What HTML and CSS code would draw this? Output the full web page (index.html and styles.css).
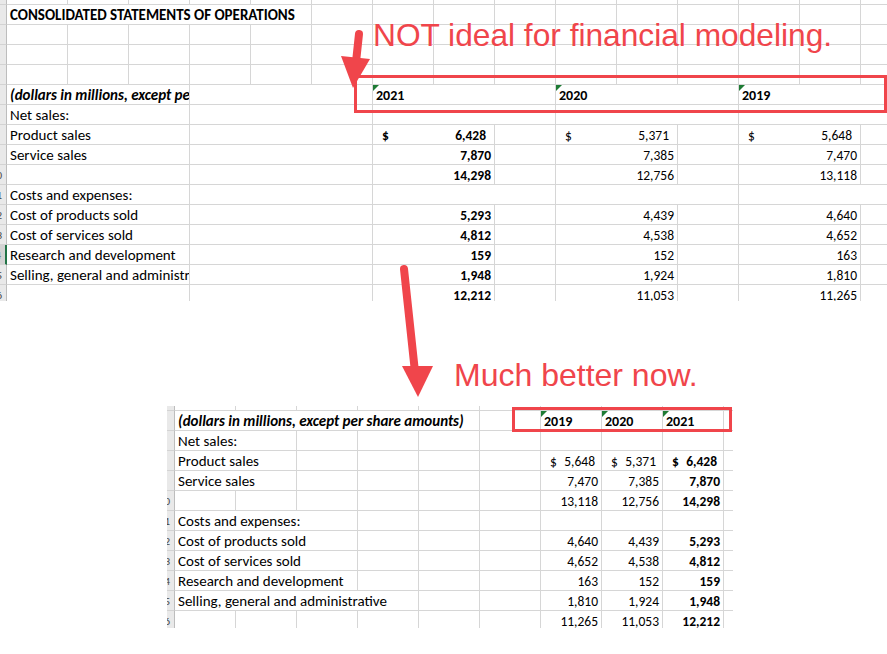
FILE: index.html
```html
<!DOCTYPE html>
<html lang="en">
<head>
<meta charset="utf-8">
<title>Consolidated statements of operations</title>
<link rel="stylesheet" href="styles.css">
</head>
<body>
<div class="page">

  <div class="sheet sheet-top">
    <div class="row stub"><div class="rh"></div><div class="c"></div><div class="c"></div><div class="c"></div><div class="c"></div><div class="c"></div><div class="c"></div><div class="c"></div><div class="c"></div><div class="c"></div><div class="c"></div><div class="c"></div><div class="c"></div><div class="c"></div><div class="c"></div><div class="c"></div></div>
    <div class="row"><div class="rh"></div><div class="c s5 t title">CONSOLIDATED STATEMENTS OF OPERATIONS</div><div class="c"></div><div class="c"></div><div class="c"></div><div class="c"></div><div class="c"></div><div class="c"></div><div class="c"></div><div class="c"></div><div class="c"></div><div class="c"></div></div>
    <div class="row"><div class="rh"></div><div class="c"></div><div class="c"></div><div class="c"></div><div class="c"></div><div class="c"></div><div class="c"></div><div class="c"></div><div class="c"></div><div class="c"></div><div class="c"></div><div class="c"></div><div class="c"></div><div class="c"></div><div class="c"></div><div class="c"></div></div>
    <div class="row"><div class="rh"></div><div class="c"></div><div class="c"></div><div class="c"></div><div class="c"></div><div class="c"></div><div class="c"></div><div class="c"></div><div class="c"></div><div class="c"></div><div class="c"></div><div class="c"></div><div class="c"></div><div class="c"></div><div class="c"></div><div class="c"></div></div>
    <div class="row"><div class="rh"></div><div class="c"></div><div class="c"></div><div class="c"></div><div class="c"></div><div class="c"></div><div class="c"></div><div class="c"></div><div class="c"></div><div class="c"></div><div class="c"></div><div class="c"></div><div class="c"></div><div class="c"></div><div class="c"></div><div class="c"></div></div>
    <div class="row"><div class="rh"></div><div class="c s3 t bi">(dollars in millions, except per share amounts)</div><div class="c s3"></div><div class="c s3 t yr flag">2021</div><div class="c s3 t yr flag">2020</div><div class="c s3 t yr flag">2019</div></div>
    <div class="row"><div class="rh"></div><div class="c s3 t">Net sales:</div><div class="c s3"></div><div class="c s3"></div><div class="c s3"></div><div class="c s3"></div></div>
    <div class="row"><div class="rh"></div><div class="c s3 t">Product sales</div><div class="c s3"></div><div class="c s2 n acct b"><span>$</span><span>6,428</span></div><div class="c"></div><div class="c s2 n acct"><span>$</span><span>5,371</span></div><div class="c"></div><div class="c s2 n acct"><span>$</span><span>5,648</span></div><div class="c"></div></div>
    <div class="row"><div class="rh"></div><div class="c s3 t">Service sales</div><div class="c s3"></div><div class="c s2 n b"><span>7,870</span></div><div class="c"></div><div class="c s2 n"><span>7,385</span></div><div class="c"></div><div class="c s2 n"><span>7,470</span></div><div class="c"></div></div>
    <div class="row"><div class="rh"><span>10</span></div><div class="c s3 t"></div><div class="c s3"></div><div class="c s2 n b"><span>14,298</span></div><div class="c"></div><div class="c s2 n"><span>12,756</span></div><div class="c"></div><div class="c s2 n"><span>13,118</span></div><div class="c"></div></div>
    <div class="row"><div class="rh"><span>11</span></div><div class="c s3 t">Costs and expenses:</div><div class="c s3"></div><div class="c s3"></div><div class="c s3"></div><div class="c s3"></div></div>
    <div class="row"><div class="rh"><span>12</span></div><div class="c s3 t">Cost of products sold</div><div class="c s3"></div><div class="c s2 n b"><span>5,293</span></div><div class="c"></div><div class="c s2 n"><span>4,439</span></div><div class="c"></div><div class="c s2 n"><span>4,640</span></div><div class="c"></div></div>
    <div class="row"><div class="rh"><span>13</span></div><div class="c s3 t">Cost of services sold</div><div class="c s3"></div><div class="c s2 n b"><span>4,812</span></div><div class="c"></div><div class="c s2 n"><span>4,538</span></div><div class="c"></div><div class="c s2 n"><span>4,652</span></div><div class="c"></div></div>
    <div class="row"><div class="rh active"><span>14</span></div><div class="c s3 t">Research and development</div><div class="c s3"></div><div class="c s2 n b"><span>159</span></div><div class="c"></div><div class="c s2 n"><span>152</span></div><div class="c"></div><div class="c s2 n"><span>163</span></div><div class="c"></div></div>
    <div class="row"><div class="rh"><span>15</span></div><div class="c s3 t">Selling, general and administrative</div><div class="c s3"></div><div class="c s2 n b"><span>1,948</span></div><div class="c"></div><div class="c s2 n"><span>1,924</span></div><div class="c"></div><div class="c s2 n"><span>1,810</span></div><div class="c"></div></div>
    <div class="row"><div class="rh"><span>16</span></div><div class="c s3 t"></div><div class="c s3"></div><div class="c s2 n b"><span>12,212</span></div><div class="c"></div><div class="c s2 n"><span>11,053</span></div><div class="c"></div><div class="c s2 n"><span>11,265</span></div><div class="c"></div></div>
  </div>

  <div class="sheet sheet-bottom">
    <div class="row stub"><div class="rh"></div><div class="c"></div><div class="c"></div><div class="c"></div><div class="c"></div><div class="c"></div><div class="c"></div><div class="c"></div><div class="c"></div><div class="c"></div><div class="c edge"></div></div>
    <div class="row"><div class="rh"></div><div class="c s5 t bi">(dollars in millions, except per share amounts)</div><div class="c"></div><div class="c t yr flag">2019</div><div class="c t yr flag">2020</div><div class="c t yr flag">2021</div><div class="c edge"></div></div>
    <div class="row"><div class="rh"></div><div class="c s2 t">Net sales:</div><div class="c"></div><div class="c"></div><div class="c"></div><div class="c"></div><div class="c"></div><div class="c"></div><div class="c"></div><div class="c edge"></div></div>
    <div class="row"><div class="rh"></div><div class="c s2 t">Product sales</div><div class="c"></div><div class="c"></div><div class="c"></div><div class="c"></div><div class="c n acct"><span>$</span><span>5,648</span></div><div class="c n acct"><span>$</span><span>5,371</span></div><div class="c n acct b"><span>$</span><span>6,428</span></div><div class="c edge"></div></div>
    <div class="row"><div class="rh"></div><div class="c s2 t">Service sales</div><div class="c"></div><div class="c"></div><div class="c"></div><div class="c"></div><div class="c n"><span>7,470</span></div><div class="c n"><span>7,385</span></div><div class="c n b"><span>7,870</span></div><div class="c edge"></div></div>
    <div class="row"><div class="rh"><span>10</span></div><div class="c"></div><div class="c"></div><div class="c"></div><div class="c"></div><div class="c"></div><div class="c"></div><div class="c n"><span>13,118</span></div><div class="c n"><span>12,756</span></div><div class="c n b"><span>14,298</span></div><div class="c edge"></div></div>
    <div class="row"><div class="rh"><span>11</span></div><div class="c s3 t">Costs and expenses:</div><div class="c"></div><div class="c"></div><div class="c"></div><div class="c"></div><div class="c"></div><div class="c"></div><div class="c edge"></div></div>
    <div class="row"><div class="rh"><span>12</span></div><div class="c s3 t">Cost of products sold</div><div class="c"></div><div class="c"></div><div class="c"></div><div class="c n"><span>4,640</span></div><div class="c n"><span>4,439</span></div><div class="c n b"><span>5,293</span></div><div class="c edge"></div></div>
    <div class="row"><div class="rh"><span>13</span></div><div class="c s3 t">Cost of services sold</div><div class="c"></div><div class="c"></div><div class="c"></div><div class="c n"><span>4,652</span></div><div class="c n"><span>4,538</span></div><div class="c n b"><span>4,812</span></div><div class="c edge"></div></div>
    <div class="row"><div class="rh"><span>14</span></div><div class="c s3 t">Research and development</div><div class="c"></div><div class="c"></div><div class="c"></div><div class="c n"><span>163</span></div><div class="c n"><span>152</span></div><div class="c n b"><span>159</span></div><div class="c edge"></div></div>
    <div class="row"><div class="rh"><span>15</span></div><div class="c s4 t">Selling, general and administrative</div><div class="c"></div><div class="c"></div><div class="c n"><span>1,810</span></div><div class="c n"><span>1,924</span></div><div class="c n b"><span>1,948</span></div><div class="c edge"></div></div>
    <div class="row"><div class="rh"><span>16</span></div><div class="c"></div><div class="c"></div><div class="c"></div><div class="c"></div><div class="c"></div><div class="c"></div><div class="c n"><span>11,265</span></div><div class="c n"><span>11,053</span></div><div class="c n b"><span>12,212</span></div><div class="c edge"></div></div>
  </div>

  <div class="note note-top">NOT ideal for financial modeling.</div>
  <div class="note note-bottom">Much better now.</div>
  <div class="box box-top"></div>
  <div class="box box-bottom"></div>

  <svg class="arrows" width="887" height="654" viewBox="0 0 887 654" aria-hidden="true">
    <line x1="359" y1="34" x2="356" y2="62" class="shaft"/>
    <polygon points="341,56 370,59 353,88" class="head"/>
    <line x1="404" y1="269" x2="415" y2="372" class="shaft"/>
    <polygon points="402,366 433,366 418,397" class="head"/>
  </svg>
</div>
</body>
</html>
```

FILE: styles.css
```css
* { box-sizing: border-box; }

html, body {
  margin: 0;
  padding: 0;
  background: #ffffff;
}

body {
  font-family: Carlito, Lato, "Liberation Sans", sans-serif;
  font-size: 15px;
  color: #000000;
}

.page {
  position: relative;
  width: 887px;
  height: 654px;
  overflow: hidden;
}

.sheet { overflow: hidden; }

.sheet-top {
  width: 887px;
  height: 301px;
}

.sheet-bottom {
  margin: 105px 0 0 167px;
  width: 566px;
  height: 222px;
}

.row {
  display: grid;
  height: 20px;
  line-height: 19px;
}

.sheet-top .row { grid-template-columns: 7px repeat(15, 61px); }
.sheet-bottom .row { grid-template-columns: 8px repeat(9, 61px) 9px; }

.row.stub { height: 5px; }

.c {
  position: relative;
  min-width: 0;
  padding-top: 1px;
  border-right: 1px solid #d6d6d6;
  border-bottom: 1px solid #d6d6d6;
  white-space: nowrap;
  overflow: hidden;
}

.c.edge { border-right: 0; }

.s2 { grid-column: span 2; }
.s3 { grid-column: span 3; }
.s4 { grid-column: span 4; }
.s5 { grid-column: span 5; }

.rh {
  display: flex;
  justify-content: flex-end;
  overflow: hidden;
  padding-top: 1px;
  background: #e9e9e9;
  border-right: 1px solid #bdbdbd;
  border-bottom: 1px solid #d3d3d3;
  font-size: 11px;
  color: #444444;
  white-space: nowrap;
}

.rh span { margin-right: 4px; }

.rh.active {
  background: #d3d3d3;
  border-right: 2px solid #217346;
}

.t { padding-left: 3px; }

.title { font-weight: 700; }

.bi {
  font-weight: 700;
  font-style: italic;
}

.yr { font-weight: 700; font-size: 14px; }

.flag::before {
  content: "";
  position: absolute;
  left: 0;
  top: 0;
  border-top: 6px solid #1e7b34;
  border-right: 6px solid transparent;
}

.n {
  display: flex;
  justify-content: flex-end;
  padding-right: 3px;
  font-size: 13.5px;
}

.n.acct {
  justify-content: space-between;
  padding-left: 9px;
}

.sheet-top .n.acct { padding-right: 8px; }
.sheet-bottom .n.acct { padding-right: 6px; }

.b { font-weight: 700; }

.note {
  position: absolute;
  font-family: "Liberation Sans", Arial, sans-serif;
  line-height: 1;
  color: #f0454b;
  white-space: nowrap;
}

.note-top { left: 373px; top: 20px; font-size: 31.7px; }
.note-bottom { left: 454px; top: 359px; font-size: 32px; }

.box {
  position: absolute;
  border: 3px solid #f0454b;
}

.box-top {
  left: 354px;
  top: 75px;
  width: 533px;
  height: 38px;
}

.box-bottom {
  left: 512px;
  top: 407px;
  width: 220px;
  height: 25px;
}

.arrows {
  position: absolute;
  left: 0;
  top: 0;
  pointer-events: none;
}

.arrows .shaft {
  stroke: #f0454b;
  stroke-width: 8;
  stroke-linecap: round;
}

.arrows .head { fill: #f0454b; }
```
